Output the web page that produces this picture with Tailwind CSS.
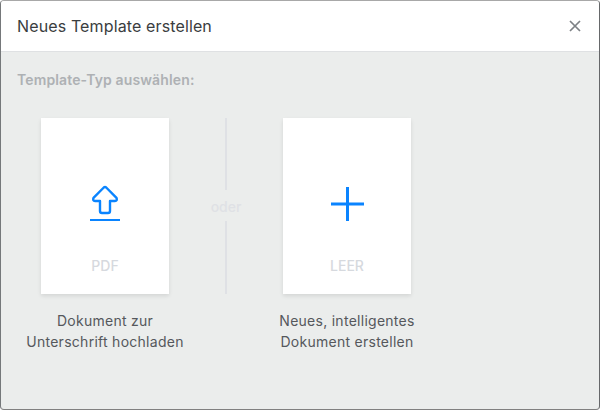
<!DOCTYPE html>
<html lang="en">
<head>
  <meta charset="UTF-8">
  <title>Neues Template erstellen</title>
  <script src="https://cdn.jsdelivr.net/npm/@tailwindcss/browser@4"></script>
</head>
<body class="w-[600px] h-[410px] overflow-hidden bg-white font-['Inter',sans-serif]">

  <div class="w-[600px] h-[410px] rounded-[4px] overflow-hidden bg-[#ebedec] flex flex-col border border-t-[#a8a8a8] border-r-[#66686a] border-b-[#808080] border-l-[#75787a]">
    <div class="h-[51px] shrink-0 bg-white border-b border-[#dfe1e3] flex items-center justify-between pl-4 pr-[18px]">
      <h2 class="text-base text-[#3a3d40] tracking-[0.13px]">Neues Template erstellen</h2>
      <svg class="w-3 h-3 text-[#7d8185]" viewBox="0 0 12 12" fill="none" stroke="currentColor" stroke-width="1.7">
        <path d="M1 1l10 10M11 1L1 11"/>
      </svg>
    </div>

    <div class="pl-4 pt-[19px]">
      <p class="text-sm leading-[18px] font-semibold text-[#aeb1b4] tracking-[0.13px]">Template-Typ auswählen:</p>

      <div class="flex mt-[29px] ml-6">
        <div class="w-[128px]">
          <div class="h-[176px] bg-white shadow-[0_2px_4px_rgba(0,0,0,0.1)] flex flex-col items-center">
            <svg class="w-8 h-[37px] mt-[67px]" viewBox="0 0 32 37" fill="none" stroke="#0a84ff" stroke-linejoin="round">
              <path stroke-width="2.4" d="M14.800 2.500Q16 1.500 17.200 2.500L27.500 12.800Q28.500 16 26 16H21V26Q21 28 19 28H13Q11 28 11 26V16H6Q3.500 16 4.500 12.800Z"/>
              <path stroke-width="2.200" d="M1 35H31"/>
            </svg>
            <span class="mt-[34px] text-sm leading-[20px] font-medium text-[#d6d9de]">PDF</span>
          </div>
          <p class="-mx-5 mt-4 text-center text-sm leading-[21px] tracking-[0.27px] text-[#55585c]">Dokument zur<br>Unterschrift hochladen</p>
        </div>

        <div class="w-[114px] h-[176px] flex flex-col items-center">
          <div class="w-0.5 grow bg-[#dfe1e5]"></div>
          <span class="pt-2 pb-[5px] text-sm leading-[18px] font-medium text-[#dfe1e5]">oder</span>
          <div class="w-0.5 h-[73px] bg-[#dfe1e5]"></div>
        </div>

        <div class="w-[128px]">
          <div class="h-[176px] bg-white shadow-[0_2px_4px_rgba(0,0,0,0.1)] flex flex-col items-center">
            <svg class="w-[34px] h-[34px] mt-[69px]" viewBox="0 0 34 34" fill="none" stroke="#0a84ff" stroke-width="3">
              <path d="M17.500 0V34M1 17H34"/>
            </svg>
            <span class="mt-[35px] text-sm leading-[20px] font-medium text-[#d6d9de]">LEER</span>
          </div>
          <p class="-mx-5 mt-4 text-center text-sm leading-[21px] tracking-[0.27px] text-[#55585c]">Neues, intelligentes<br>Dokument erstellen</p>
        </div>
      </div>
    </div>
  </div>

</body>
</html>
